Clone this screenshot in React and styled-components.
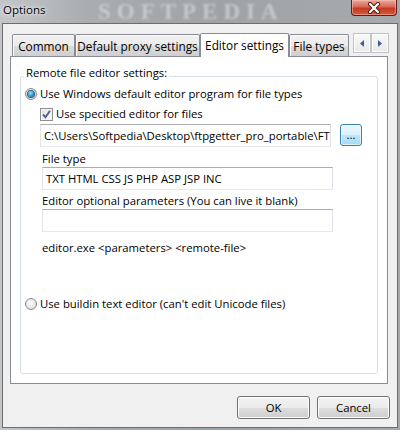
import React from 'react'
import styled, {createGlobalStyle} from 'styled-components'

const GlobalStyle = createGlobalStyle`
  html, body {
    margin: 0;
    padding: 0;
  }
  body {
    font-family: "Open Sans", "Noto Sans", sans-serif;
    font-size: 11.3px;
    color: #000;
  }
`

const Window = styled.div`
  width: 400px;
  height: 430px;
  display: flex;
  flex-direction: column;
  overflow: hidden;
  background: linear-gradient(90deg, #c3c7ca 0%, #a9adb0 22%, #9ea3a7 55%, #a6aaad 100%);
`

const TitleBar = styled.div`
  height: 23px;
  display: flex;
  align-items: flex-start;
  position: relative;
`

const Title = styled.span`
  margin: 2px 0 0 3px;
  line-height: 16px;
  font-size: 11.5px;
  text-shadow: 0 0 6px #fff, 0 0 3px rgba(255, 255, 255, 0.8);
  z-index: 1;
`

const Watermark = styled.span`
  position: absolute;
  left: 98px;
  top: 0;
  height: 23px;
  line-height: 23px;
  font-family: "Liberation Serif", serif;
  font-weight: bold;
  font-size: 23px;
  letter-spacing: 6px;
  color: rgba(232, 235, 238, 0.5);
  filter: blur(1.1px);
  pointer-events: none;
`

const CloseButton = styled.div`
  margin-left: auto;
  margin-right: 3px;
  width: 46px;
  height: 16px;
  box-sizing: border-box;
  border: 1px solid #5b1f17;
  border-top: none;
  border-radius: 0 0 4px 4px;
  background: linear-gradient(#e9a99a 0%, #d66a55 45%, #c73a22 55%, #d45a3c 100%);
  box-shadow: inset 0 0 0 1px rgba(255, 200, 190, 0.5);
  display: flex;
  align-items: center;
  justify-content: center;
`

const Client = styled.div`
  flex: 1;
  margin: 0 2px 2px 2px;
  border: 1px solid #6d6d6d;
  background: #f0f0f0;
  display: flex;
  flex-direction: column;
  padding-top: 9px;
`

const TabStrip = styled.div`
  height: 23px;
  display: flex;
  align-items: flex-end;
  padding-left: 9px;
`

const Tab = styled.div`
  width: ${p => p.w}px;
  height: ${p => (p.active ? 24 : 22)}px;
  margin-bottom: ${p => (p.active ? -1 : 0)}px;
  box-sizing: border-box;
  border: 1px solid #898c95;
  border-bottom: none;
  border-radius: 2px 2px 0 0;
  background: ${p => (p.active
    ? '#fff'
    : 'linear-gradient(#f2f2f2 0%, #ebebeb 50%, #dddddd 51%, #cfcfcf 100%)')};
  box-shadow: ${p => (p.active ? 'none' : 'inset 1px 1px 0 #fcfcfc')};
  position: relative;
  z-index: ${p => (p.active ? 2 : 0)};
  display: flex;
  align-items: center;
  justify-content: center;
  line-height: 16px;
  font-size: 11.8px;
  padding-bottom: ${p => (p.active ? 2 : 0)}px;
  white-space: nowrap;
`

const ScrollArrows = styled.div`
  margin-left: 4px;
  margin-bottom: 3px;
  display: flex;
`

const ArrowButton = styled.div`
  width: 18px;
  height: 20px;
  box-sizing: border-box;
  border: 1px solid #c3c3c3;
  background: linear-gradient(#f9f9f9, #e8e8e8);
  box-shadow: inset 0 0 0 1px #fdfdfd;
  display: flex;
  align-items: center;
  justify-content: center;
`

const Panel = styled.div`
  width: 378px;
  height: 328px;
  margin-left: 7px;
  box-sizing: border-box;
  border: 1px solid #898c95;
  background: #fff;
  padding: 19px 9px 0 9px;
  position: relative;
  z-index: 1;
`

const GroupBox = styled.div`
  height: 298px;
  box-sizing: border-box;
  border: 1px solid #d5dfe5;
  border-radius: 3px;
  display: flex;
  flex-direction: column;
`

const Caption = styled.span`
  align-self: flex-start;
  margin: -12px 0 0 3px;
  padding: 0 2px;
  background: #fff;
  line-height: 16px;
`

const Row = styled.div`
  display: flex;
  align-items: center;
  height: ${p => p.h || 16}px;
  margin-top: ${p => p.mt || 0}px;
  padding-left: ${p => p.pl || 0}px;
  gap: ${p => p.gap || 0}px;
  line-height: 16px;
  white-space: nowrap;
`

const Radio = styled.span`
  width: 12px;
  height: 12px;
  box-sizing: border-box;
  border-radius: 50%;
  border: 1px solid #8b8b8b;
  background: radial-gradient(circle at 45% 40%, #ffffff 0%, #e6e6e6 55%, #cfcfcf 100%);
  display: flex;
  align-items: center;
  justify-content: center;
  flex: none;
  &::after {
    content: '';
    display: ${p => (p.checked ? 'block' : 'none')};
    width: 6px;
    height: 6px;
    border-radius: 50%;
    background: radial-gradient(circle at 40% 35%, #a6e4fb 0%, #2f9ad6 50%, #115a94 100%);
    box-shadow: 0 0 0 1px #2a5d86;
  }
`

const CheckBox = styled.span`
  width: 13px;
  height: 13px;
  box-sizing: border-box;
  border: 1px solid #8e8f8f;
  background: linear-gradient(135deg, #dcdcdc 0%, #f4f4f4 60%, #ffffff 100%);
  box-shadow: inset 0 0 0 1px #f5f5f5;
  display: flex;
  align-items: center;
  justify-content: center;
  flex: none;
`

const TextBox = styled.div`
  width: ${p => p.w}px;
  height: 23px;
  box-sizing: border-box;
  border: 1px solid #abadb3;
  border-color: #abadb3 #dbdfe6 #e3e9ef #e2e3ea;
  background: #fff;
  padding: 0 3px;
  line-height: 21px;
  white-space: nowrap;
  overflow: hidden;
  flex: none;
`

const BrowseButton = styled.div`
  width: 22px;
  height: 22px;
  margin-left: 9px;
  align-self: flex-start;
  box-sizing: border-box;
  border: 1px solid #3c7fb1;
  border-radius: 3px;
  background: linear-gradient(#eaf6fd 0%, #d9f0fc 50%, #bee6fd 51%, #a7d9f5 100%);
  box-shadow: inset 0 0 0 1px rgba(255, 255, 255, 0.6);
  display: flex;
  align-items: center;
  justify-content: center;
  line-height: 12px;
`

const FieldLabel = styled.div`
  margin-top: ${p => p.mt || 0}px;
  padding-left: 21px;
  height: 16px;
  line-height: 16px;
  white-space: nowrap;
`

const FieldBox = styled.div`
  padding-left: 21px;
`

const ButtonRow = styled.div`
  display: flex;
  justify-content: flex-end;
  gap: 7px;
  margin-top: 12px;
  padding-right: 7px;
`

const DialogButton = styled.div`
  width: 73px;
  height: 23px;
  box-sizing: border-box;
  border: 1px solid #707070;
  border-radius: 3px;
  background: linear-gradient(#f2f2f2 0%, #ebebeb 50%, #dddddd 51%, #cfcfcf 100%);
  box-shadow: inset 0 0 0 1px #fcfcfc;
  display: flex;
  align-items: center;
  justify-content: center;
`

const Arrow = ({dir}) => (
  <svg width="4" height="7" viewBox="0 0 4 7">
    <path d={dir === 'left' ? 'M4 0 L0 3.5 L4 7 Z' : 'M0 0 L4 3.5 L0 7 Z'} fill="#3f5f9a" />
  </svg>
)

const Check = () => (
  <svg width="11" height="11" viewBox="0 0 11 11">
    <path d="M2 5.5 L4.5 8.3 L9 1.8" fill="none" stroke="#4a5f97" strokeWidth="1.9" />
  </svg>
)

const CloseGlyph = () => (
  <svg width="14" height="12" viewBox="0 0 14 12">
    <path d="M3 2 L11 10 M11 2 L3 10" stroke="#4a1a12" strokeWidth="4" strokeLinecap="round" />
    <path d="M3 2 L11 10 M11 2 L3 10" stroke="#fff" strokeWidth="2.2" strokeLinecap="round" />
  </svg>
)

export default function App() {
  return (
    <Window>
      <GlobalStyle />
      <TitleBar>
        <Title>Options</Title>
        <Watermark>SOFTPEDIA</Watermark>
        <CloseButton><CloseGlyph /></CloseButton>
      </TitleBar>
      <Client>
        <TabStrip>
          <Tab w={63}>Common</Tab>
          <Tab w={125}>Default proxy settings</Tab>
          <Tab w={89} active>Editor settings</Tab>
          <Tab w={60}>File types</Tab>
          <ScrollArrows>
            <ArrowButton><Arrow dir="left" /></ArrowButton>
            <ArrowButton><Arrow dir="right" /></ArrowButton>
          </ScrollArrows>
        </TabStrip>
        <Panel>
          <GroupBox>
            <Caption>Remote file editor settings:</Caption>
            <Row mt={5} pl={4} gap={3}>
              <Radio checked />
              <span>Use Windows default editor program for file types</span>
            </Row>
            <Row mt={4} pl={19} gap={3}>
              <CheckBox><Check /></CheckBox>
              <span>Use specitied editor for files</span>
            </Row>
            <Row mt={2} pl={19} h={23}>
              <TextBox w={291}>C:\Users\Softpedia\Desktop\ftpgetter_pro_portable\FT</TextBox>
              <BrowseButton>...</BrowseButton>
            </Row>
            <FieldLabel mt={4}>File type</FieldLabel>
            <FieldBox>
              <TextBox w={291}>TXT HTML CSS JS PHP ASP JSP INC</TextBox>
            </FieldBox>
            <FieldLabel mt={3}>Editor optional parameters (You can live it blank)</FieldLabel>
            <FieldBox>
              <TextBox w={291} />
            </FieldBox>
            <FieldLabel mt={8}>editor.exe &lt;parameters&gt; &lt;remote-file&gt;</FieldLabel>
            <Row mt={40} pl={4} gap={3}>
              <Radio />
              <span>Use buildin text editor (can't edit Unicode files)</span>
            </Row>
          </GroupBox>
        </Panel>
        <ButtonRow>
          <DialogButton>OK</DialogButton>
          <DialogButton>Cancel</DialogButton>
        </ButtonRow>
      </Client>
    </Window>
  )
}
